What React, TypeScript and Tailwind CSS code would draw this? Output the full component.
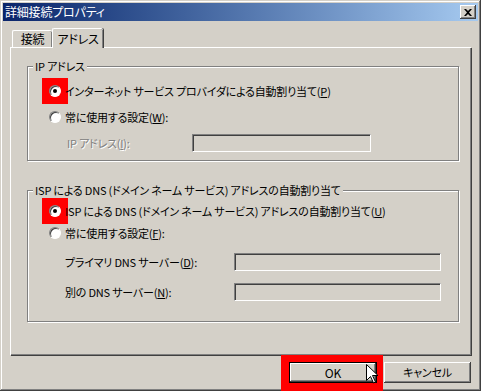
const font = "font-['Noto_Sans_CJK_JP','Noto_Sans',sans-serif] [font-feature-settings:'palt']";

function Radio({ checked }: { checked?: boolean }) {
    return (
        <span className="relative flex h-[12px] w-[12px] shrink-0 items-center justify-center rounded-full border border-t-[#808080] border-l-[#808080] border-r-white border-b-white bg-white shadow-[inset_1px_1px_#404040]">
            {checked && <span className="h-[4px] w-[4px] rounded-full bg-black" />}
        </span>
    );
}

function Field({ className }: { className: string }) {
    return <div className={"h-[18px] border border-t-[#808080] border-l-[#808080] border-r-white border-b-white bg-[#d4d0c8] shadow-[inset_1px_1px_#404040] " + className} />;
}

function U({ children }: { children: string }) {
    return <span className="underline underline-offset-1">{children}</span>;
}

function Group({ title, children, className }: { title: string; children: React.ReactNode; className?: string }) {
    return (
        <fieldset className={"ml-[16px] w-[432px] border border-[#808080] shadow-[inset_1px_1px_#fff,1px_1px_#fff] " + (className ?? "")}>
            <legend className="ml-[5px] h-[14px] bg-[#d4d0c8] px-[2px] leading-[14px]">{title}</legend>
            {children}
        </fieldset>
    );
}

export default function App() {
    return (
        <div className={"relative flex h-[391px] w-[481px] flex-col bg-[#d4d0c8] p-[3px] text-[11px] tracking-[-0.2px] text-black " + font + " shadow-[inset_-1px_-1px_#404040,inset_1px_1px_#d4d0c8,inset_-2px_-2px_#808080,inset_2px_2px_#fff]"}>
            <div className="flex h-[18px] items-center justify-between bg-linear-to-r from-[#0a246a] to-[#a6caf0] pl-[2px] pr-[2px]">
                <span className="text-[12px] leading-none text-white">詳細接続プロパティ</span>
                <button className="flex h-[14px] w-[16px] items-center justify-center bg-[#d4d0c8] shadow-[inset_-1px_-1px_#404040,inset_1px_1px_#fff,inset_-2px_-2px_#808080]">
                    <svg width="8" height="7" viewBox="0 0 8 7">
                        <path d="M0 0h2l2 2 2-2h2L5 3.5 8 7H6L4 5 2 7H0l3-3.5z" fill="#000" />
                    </svg>
                </button>
            </div>

            <div className="ml-[7px] mt-[7px] flex h-[19px] items-end">
                <div className="ml-[2px] flex h-[17px] w-[40px] items-center justify-center rounded-t-[2px] border-l border-t border-white text-[12px] shadow-[inset_-1px_0_#808080]">
                    接続
                </div>
                <div className="relative z-10 -mb-px flex h-[20px] w-[51px] items-center justify-center rounded-t-[2px] border-l border-t border-white bg-[#d4d0c8] text-[12px] shadow-[inset_-1px_0_#808080,1px_0_#404040]">
                    アドレス
                </div>
            </div>

            <div className="ml-[7px] flex h-[308px] w-[461px] flex-col border-l border-t border-white shadow-[inset_-1px_-1px_#808080,1px_1px_#404040]">
                <Group title="IP アドレス" className="mt-[11px] pb-[8px]">
                    <div className="mt-[8px] flex h-[20px] items-center">
                        <span className="ml-[14px] flex h-[26px] w-[26px] items-center justify-center bg-[#ff0000]">
                            <Radio checked />
                        </span>
                        <span className="-ml-[3px]">インターネット サービス プロバイダによる自動割り当て(<U>P</U>)</span>
                    </div>
                    <div className="mt-[6px] flex h-[20px] items-center">
                        <span className="ml-[21px] mr-[4px]"><Radio /></span>
                        <span>常に使用する設定(<U>W</U>):</span>
                    </div>
                    <div className="mt-[7px] flex items-center">
                        <span className="ml-[39px] w-[125px] text-[#808080] [text-shadow:1px_1px_#fff]">IP アドレス(<U>I</U>):</span>
                        <Field className="w-[179px]" />
                    </div>
                </Group>

                <Group title="ISP による DNS (ドメイン ネーム サービス) アドレスの自動割り当て" className="mt-[22px] pb-[20px]">
                    <div className="mt-[4px] flex h-[20px] items-center">
                        <span className="ml-[14px] flex h-[26px] w-[26px] items-center justify-center bg-[#ff0000]">
                            <Radio checked />
                        </span>
                        <span className="-ml-[3px]">ISP による DNS (ドメイン ネーム サービス) アドレスの自動割り当て(<U>U</U>)</span>
                    </div>
                    <div className="mt-[2px] flex h-[20px] items-center">
                        <span className="ml-[21px] mr-[4px]"><Radio /></span>
                        <span>常に使用する設定(<U>F</U>):</span>
                    </div>
                    <div className="mt-[10px] flex items-center">
                        <span className="ml-[37px] w-[169px]">プライマリ DNS サーバー(<U>D</U>):</span>
                        <Field className="w-[207px]" />
                    </div>
                    <div className="mt-[12px] flex items-center">
                        <span className="ml-[37px] w-[169px]">別の DNS サーバー(<U>N</U>):</span>
                        <Field className="w-[207px]" />
                    </div>
                </Group>
            </div>

            <div className="-mb-[3px] flex flex-1 justify-end pr-[7px]">
                <div className="bg-[#ff0000] pb-[8px] pl-[8px] pr-[6px] pt-[7px]">
                    <button className="flex h-[21px] w-[88px] items-center justify-center border border-black bg-[#d4d0c8] text-[12px] shadow-[inset_-1px_-1px_#404040,inset_1px_1px_#fff,inset_-2px_-2px_#808080]">
                        OK
                    </button>
                </div>
                <div className="ml-[1px] pt-[7px]">
                    <button className="flex h-[21px] w-[87px] items-center justify-center bg-[#d4d0c8] shadow-[inset_-1px_-1px_#404040,inset_1px_1px_#fff,inset_-2px_-2px_#808080]">
                        キャンセル
                    </button>
                </div>
            </div>

            <svg className="absolute left-[366px] top-[364px]" width="12" height="20" viewBox="0 0 12 20">
                <path d="M0.5 0.5v16l4-4 3 6.5 2-1-3-6.5h5.5z" fill="#fff" stroke="#000" strokeWidth="1" />
            </svg>
        </div>
    );
}
